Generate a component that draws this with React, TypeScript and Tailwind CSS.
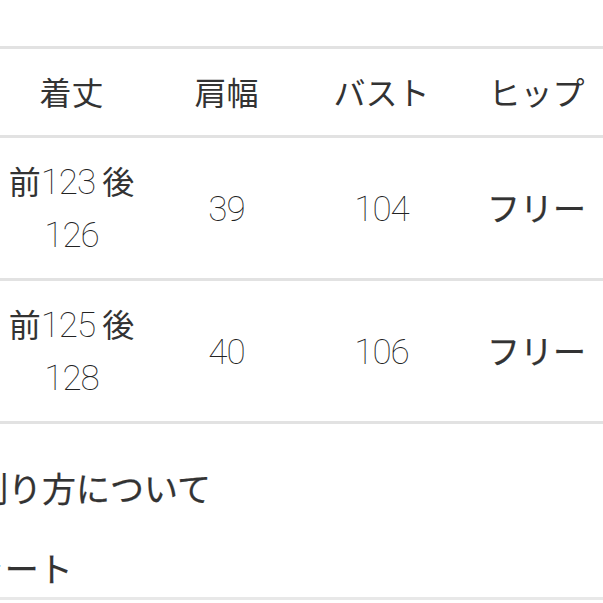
import React from "react";

const jp = { fontFamily: '"Noto Sans CJK JP", "Noto Sans", sans-serif' };

function Num({ children }: { children: React.ReactNode }) {
  return (
    <span className="font-['Roboto','Lato',sans-serif] font-thin text-[35px] tracking-[-1px] text-[#222]">
      {children}
    </span>
  );
}

function Cell({ children }: { children: React.ReactNode }) {
  return (
    <div className="flex items-center justify-center text-center w-[155px] shrink-0">
      {children}
    </div>
  );
}

export default function App() {
  const rows = [
    { f: "123", b: "126", shoulder: "39", bust: "104" },
    { f: "125", b: "128", shoulder: "40", bust: "106" },
  ];
  return (
    <div
      className="w-[603px] h-[603px] overflow-hidden bg-white text-[#333] relative"
      style={jp}
    >
      <div className="h-[46px]" />
      <div className="border-t-[3px] border-[#e2e2e2]">
        <div className="flex h-[89px] ml-[-6px] text-[32px] leading-none border-b-[3px] border-[#e2e2e2] w-[626px] pb-[2px]">
          <Cell>着丈</Cell>
          <Cell>肩幅</Cell>
          <Cell>バスト</Cell>
          <Cell>ヒップ</Cell>
        </div>
        {rows.map((r, i) => (
          <div
            key={i}
            className="flex h-[143px] ml-[-6px] text-[32px] border-b-[3px] border-[#e2e2e2] w-[626px]"
          >
            <Cell>
              <div className="leading-[51px]">
                <div className="whitespace-nowrap">
                  前<Num>{r.f}</Num> 後
                </div>
                <div>
                  <Num>{r.b}</Num>
                </div>
              </div>
            </Cell>
            <Cell>
              <div className="pt-[4px]">
                <Num>{r.shoulder}</Num>
              </div>
            </Cell>
            <Cell>
              <div className="pt-[4px]">
                <Num>{r.bust}</Num>
              </div>
            </Cell>
            <Cell>
              <span className="text-[33px] [-webkit-text-stroke:0.25px_#333]">フリー</span>
            </Cell>
          </div>
        ))}
      </div>
      <div className="text-[34px] leading-[40px] text-[#333] [-webkit-text-stroke:0.25px_#333]">
        <div className="mt-[44px] ml-[-26px] whitespace-nowrap">測り方について</div>
        <div className="mt-[40px] ml-[-164px] whitespace-nowrap">サイズチャート</div>
      </div>
      <div className="mt-[9px] border-t-[3px] border-[#e8e8e8]" />
    </div>
  );
}
